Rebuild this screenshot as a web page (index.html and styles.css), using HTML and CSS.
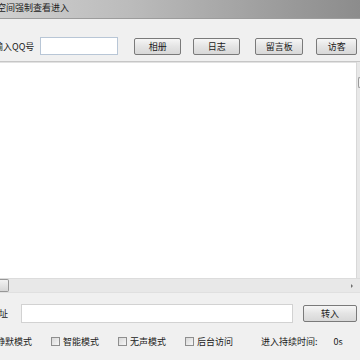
FILE: index.html
```html
<!DOCTYPE html>
<html lang="zh-CN">
<head>
    <meta charset="UTF-8">
    <title>空间强制查看进入</title>
    <link rel="stylesheet" href="styles.css">
</head>
<body>
    <div class="titlebar">空间强制查看进入</div>

    <div class="toolbar">
        <span class="label qq-label">输入QQ号</span>
        <input type="text" class="qq-input">
        <button class="btn btn-album">相册</button>
        <button class="btn btn-diary">日志</button>
        <button class="btn btn-board">留言板</button>
        <button class="btn btn-visit">访客</button>
    </div>

    <!-- Log area with scroll bars -->
    <div class="log">
        <div class="log-text"></div>
        <div class="vscroll"><div class="vthumb"></div></div>
    </div>
    <div class="hscroll">
        <div class="hthumb"></div>
        <span class="harrow"></span>
    </div>

    <div class="address">
        <span class="label addr-label">地址</span>
        <input type="text" class="addr-input">
        <button class="btn btn-go">转入</button>
    </div>

    <div class="options">
        <label class="opt opt-first">静默模式</label>
        <label class="opt"><span class="check"></span>智能模式</label>
        <label class="opt"><span class="check"></span>无声模式</label>
        <label class="opt"><span class="check"></span>后台访问</label>
        <span class="timer">进入持续时间:</span>
        <span class="timer-value">0s</span>
    </div>
</body>
</html>
```

FILE: styles.css
```css
body {
    margin: 0;
    width: 360px;
    height: 360px;
    overflow: hidden;
    background: #f0f0f0;
    font-family: "Noto Sans CJK SC", "Liberation Sans", sans-serif;
    font-size: 9px;
    color: #1a1a1a;
}
.titlebar {
    height: 18px;
    line-height: 16px;
    text-indent: -3px;
    white-space: nowrap;
    color: #222;
    background: linear-gradient(to right, #cfcfcf, #bcbcbc 35%, #9a9a9a 80%, #8c8c8c);
    border-bottom: 1px solid #9c9c9c;
}

/* top row */
.toolbar {
    display: flex;
    align-items: center;
    height: 18px;
    padding: 18px 0 6px;
}
.label {
    white-space: nowrap;
    flex-shrink: 0;
}
.qq-label {
    margin-left: -6px;
}
.qq-input {
    width: 78px;
    height: 18px;
    margin: 0 0 0 6px;
    padding: 0;
    box-sizing: border-box;
    border: 1px solid #b8c6d6;
    background: #fff;
}
.btn {
    height: 17px;
    padding: 0;
    box-sizing: border-box;
    border: 1px solid #7a7a7a;
    border-radius: 2px;
    background: linear-gradient(#f6f6f6, #e4e4e4 50%, #d8d8d8);
    font-family: inherit;
    font-size: 9px;
    color: #1a1a1a;
    line-height: 15px;
}
.btn-album { width: 47px; margin-left: 16px; }
.btn-diary { width: 47px; margin-left: 12px; }
.btn-board { width: 48px; margin-left: 15px; }
.btn-visit { width: 41px; margin-left: 13px; }

/* log area */
.log {
    display: flex;
    height: 216px;
    border-top: 1px solid #c6c6c6;
}
.log-text {
    flex: 1;
    background: #fff;
    border-right: 1px solid #d8d8d8;
    box-shadow: inset 0 1px 0 #e2e2e2;
}
.vscroll {
    width: 3px;
    background: #e8e8e8;
    padding-top: 15px;
}
.vthumb {
    height: 9px;
    margin-left: 1px;
    border: 1px solid #9a9a9a;
    border-right: none;
    border-radius: 2px 0 0 2px;
    background: #f4f4f4;
}
.hscroll {
    display: flex;
    align-items: center;
    justify-content: space-between;
    height: 13px;
    background: #e8e8e8;
    border-top: 1px solid #dcdcdc;
    border-bottom: 1px solid #e0e0e0;
}
.hthumb {
    width: 8px;
    height: 11px;
    border: 1px solid #979797;
    border-left: none;
    border-radius: 0 2px 2px 0;
    background: linear-gradient(#f2f2f2, #d6d6d6);
}
.harrow {
    width: 0;
    height: 0;
    margin-right: 7px;
    border-top: 2px solid transparent;
    border-bottom: 2px solid transparent;
    border-left: 2px solid #707070;
}

/* address row */
.address {
    display: flex;
    align-items: center;
    height: 19px;
    margin-top: 11px;
}
.addr-label {
    margin-left: -10px;
}
.addr-input {
    width: 272px;
    height: 19px;
    margin: 0 0 0 13px;
    padding: 0;
    box-sizing: border-box;
    border: 1px solid #d2d2d2;
    background: #fff;
}
.btn-go {
    width: 54px;
    margin-left: 10px;
}

/* options row */
.options {
    display: flex;
    align-items: center;
    height: 12px;
    margin-top: 12px;
    white-space: nowrap;
}
.opt {
    display: flex;
    align-items: center;
    margin-left: 19px;
}
.opt-first {
    margin-left: -4px;
}
.check {
    width: 9px;
    height: 9px;
    margin-right: 3px;
    box-sizing: border-box;
    border: 1px solid #8e8e8e;
    background: linear-gradient(135deg, #d8d8d8, #f6f6f6);
}
.timer {
    margin-left: 28px;
}
.timer-value {
    margin-left: 16px;
}
```
